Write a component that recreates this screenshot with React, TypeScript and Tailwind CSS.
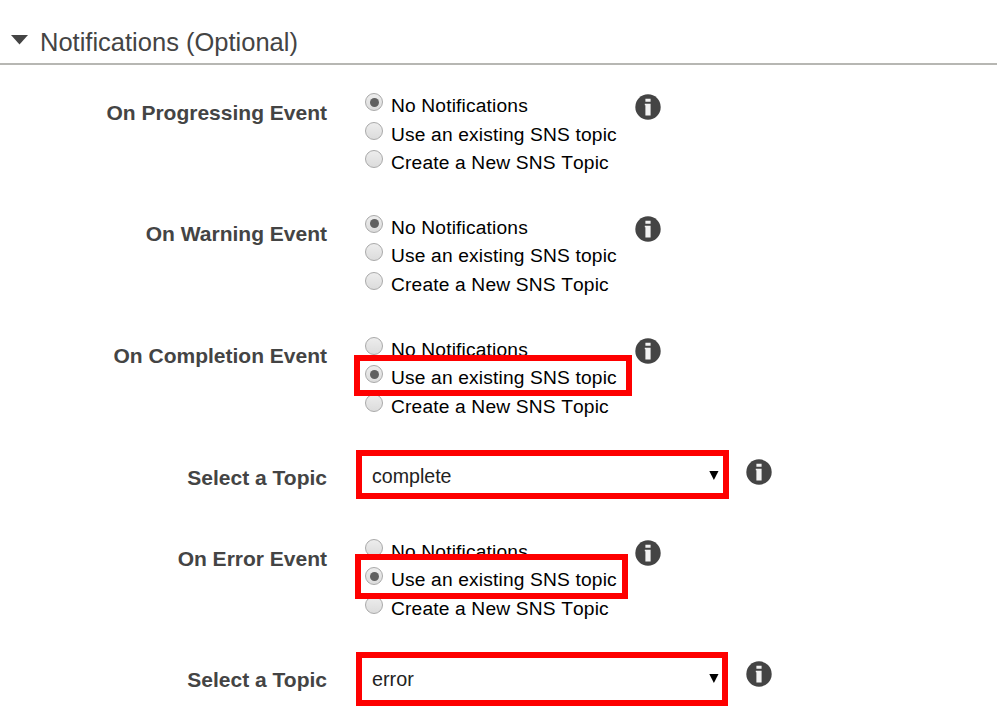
import React from "react";

const OPTIONS = ["No Notifications", "Use an existing SNS topic", "Create a New SNS Topic"];

function InfoIcon() {
  return (
    <svg width="26" height="26" viewBox="0 0 26 26" className="shrink-0">
      <circle cx="13" cy="13" r="12.7" fill="#444" />
      <path d="M10.4 4.7h5.2v3.1h-5.2zM9.8 9.8h5.8v11.6h-5.2v-10.1h-.6z" fill="#f2f2f2" />
    </svg>
  );
}

function Radio({ checked }: { checked: boolean }) {
  return (
    <span className="flex size-[18px] shrink-0 items-center justify-center rounded-full border border-[#a9a9a9] bg-linear-to-b from-[#ededed] to-[#dcdcdc]">
      {checked && <span className="size-[9px] rounded-full bg-[#606060]" />}
    </span>
  );
}

function Label({ children }: { children: React.ReactNode }) {
  return (
    <div className="w-[327px] shrink-0 text-right text-[21px] leading-6 font-bold whitespace-nowrap text-[#444]">
      {children}
    </div>
  );
}

function EventRow({ label, selected, className, mark }: { label: string; selected: number; className: string; mark?: string }) {
  return (
    <div className={`relative flex shrink-0 items-start ${className}`}>
      <div className="pt-[12.6px]">
        <Label>{label}</Label>
      </div>
      <div className="ml-[38px] flex w-[270px] flex-col pt-[5px]">
        {OPTIONS.map((text, i) => (
          <label key={text} className="flex h-[28.5px] items-start">
            <Radio checked={i === selected} />
            <span className="ml-[8px] pt-px text-[19.2px] leading-6 tracking-[0.16px] whitespace-nowrap text-black [font-kerning:none]">{text}</span>
          </label>
        ))}
      </div>
      <div className="pt-[6px]">
        <InfoIcon />
      </div>
      {mark && <div className={`absolute border-6 border-[#fe0000] ${mark}`} />}
    </div>
  );
}

function TopicRow({ value, className, box, text }: { value: string; className: string; box: string; text: string }) {
  return (
    <div className={`flex shrink-0 items-start ${className}`}>
      <div className="pt-[18px]">
        <Label>Select a Topic</Label>
      </div>
      <div className="ml-[29px] w-[390px] pt-[2px]">
        <div className={`flex items-center justify-between border-6 border-[#fe0000] bg-white pl-[10px] ${box}`}>
          <span className={`leading-6 text-[#222] ${text}`}>{value}</span>
          <svg width="10" height="9" viewBox="0 0 10 9">
            <path d="M0.3 0h9.2L4.9 9z" fill="#000" />
          </svg>
        </div>
      </div>
      <div className="pt-[11px]">
        <InfoIcon />
      </div>
    </div>
  );
}

export default function App() {
  return (
    <div className="flex h-[719px] w-[997px] flex-col overflow-hidden bg-white font-['Liberation_Sans',Arial,sans-serif]">
      <header className="flex h-[65px] shrink-0 items-start border-b-2 border-[#b7b7b3] pl-[11px]">
        <svg width="17" height="10" viewBox="0 0 17 10" className="mt-[35px]">
          <path d="M0 0h17L8.5 9.5z" fill="#444" />
        </svg>
        <h2 className="ml-[12px] pt-[26px] text-[25.5px] leading-8 whitespace-nowrap text-[#444]">Notifications (Optional)</h2>
      </header>
      <main className="flex flex-col pt-[23px]">
        <EventRow label="On Progressing Event" selected={0} className="h-[121.8px]" />
        <EventRow label="On Warning Event" selected={0} className="h-[121.8px]" />
        <EventRow label="On Completion Event" selected={1} className="h-[116.4px]" mark="left-[354px] top-[23.4px] h-[41px] w-[278px]" />
        <TopicRow value="complete" className="h-[86px]" box="h-[49px] w-[373px] pt-[3px] pr-[4px]" text="text-[19.6px]" />
        <EventRow label="On Error Event" selected={1} className="h-[116px]" mark="left-[355px] top-[20px] h-[45px] w-[273px]" />
        <TopicRow value="error" className="h-[69px]" box="h-[54px] w-[372px] pr-[3px]" text="text-[19.8px]" />
      </main>
    </div>
  );
}
